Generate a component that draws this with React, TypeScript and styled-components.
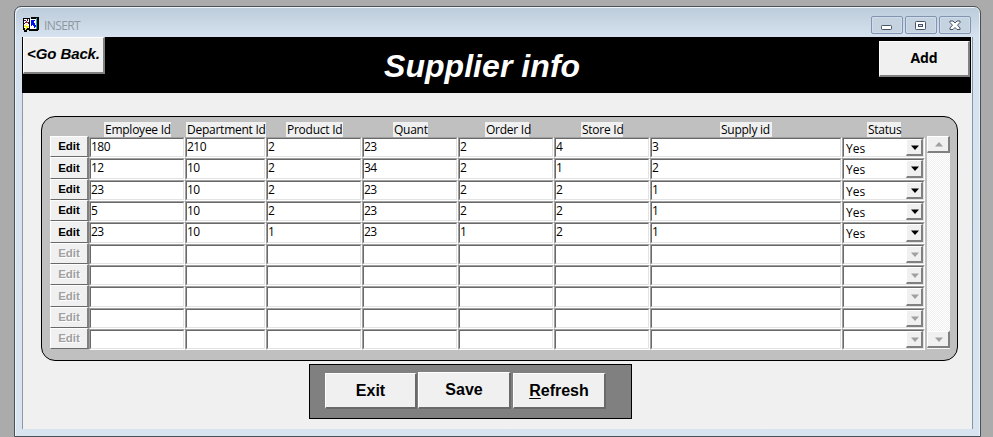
import React from "react";
import styled, { createGlobalStyle, css } from "styled-components";

const GlobalStyle = createGlobalStyle`
  * { box-sizing: border-box; }
  body { margin: 0; background: #ababab; overflow: hidden; }
  button { font: inherit; padding: 0; margin: 0; border-radius: 0; }
`;

const raised = css`
  background: #f0f0f0;
  border-style: solid;
  border-width: 1px 2px 2px 1px;
  border-color: #fff #808080 #808080 #fff;
`;

const Desktop = styled.div`
  width: 993px;
  height: 437px;
  padding: 6px 12px 0 14px;
  background: #ababab;
  font-family: "Open Sans", "Noto Sans", sans-serif;
`;

const Window = styled.div`
  width: 967px;
  height: 431px;
  border: 1px solid #4a5058;
  border-radius: 7px 7px 0 0;
  background: linear-gradient(#bccbda 0, #d6e2ef 30px, #d8e4f0 100%);
  box-shadow: inset 1px 1px 0 #eef4fa, inset -1px 0 0 #e8f0f8;
  padding: 0 7px;
`;

const TitleBar = styled.header`
  height: 30px;
  display: flex;
  align-items: flex-start;
  padding: 9px 2px 0 1px;
`;

const IconSlot = styled.span`
  display: flex;
  margin-top: 1px;
`;

const Caption = styled.span`
  flex: 1;
  margin: 2px 0 0 4px;
  font: 12px/16px "Open Sans", sans-serif;
  letter-spacing: -0.6px;
  color: #8f979e;
`;

const CaptionButtons = styled.div`
  display: flex;
  gap: 2px;
`;

const CaptionButton = styled.button`
  width: 32px;
  height: 18px;
  border: 1px solid #8194b0;
  border-radius: 2px;
  background: #c5d3e1;
  box-shadow: inset 0 0 0 1px #d0dce9;
  display: flex;
  align-items: center;
  justify-content: center;
`;

const Client = styled.main`
  height: 392px;
  width: 951px;
  background: #f0f0f0;
  border-left: 1px solid #8d99a6;
  border-right: 1px solid #8795a3;
  display: flex;
  flex-direction: column;
`;

const Banner = styled.div`
  height: 56px;
  width: 949px;
  margin-left: -1px;
  padding-left: 1px;
  background: #000;
  display: flex;
  align-items: flex-start;
  flex: none;
`;

const Title = styled.h1`
  flex: 1;
  margin: 8px 0 0 0;
  padding-left: 279px;
  font: italic bold 32px/42px "Liberation Sans", Arial, sans-serif;
  letter-spacing: 0.05px;
  white-space: nowrap;
  color: #fff;
`;

const BackButton = styled.button`
  ${raised}
  width: 82px;
  height: 37px;
  padding-bottom: 2px;
  font: italic bold 15px/32px "Liberation Sans", Arial, sans-serif;
  letter-spacing: -0.1px;
  white-space: nowrap;
`;

const AddButton = styled.button`
  ${raised}
  width: 91px;
  height: 36px;
  margin: 4px 1px 0 0;
  padding-bottom: 2px;
  font: bold 14px/30px "Open Sans", sans-serif;
  letter-spacing: -0.2px;
`;

const Panel = styled.section`
  width: 917px;
  height: 245px;
  flex: none;
  margin: 23px 0 0 18px;
  padding: 5px 0 0 8px;
  border: 1px solid #000;
  border-radius: 14px;
  background: #c0c0c0;
`;

const Labels = styled.div`
  display: flex;
  height: 14px;
`;

const Label = styled.span<{ $gap: number; $w: number }>`
  flex: none;
  margin-left: ${(p) => p.$gap}px;
  width: ${(p) => p.$w}px;
  height: 15px;
  padding-left: 1px;
  background: #f0f0f0;
  font-size: 12px;
  line-height: 15px;
  letter-spacing: -0.25px;
  white-space: nowrap;
  color: #000;
`;

const Body = styled.div`
  display: flex;
`;

const Rows = styled.div`
  width: 877px;
`;

const Row = styled.div<{ $h: number }>`
  display: flex;
  height: ${(p) => p.$h}px;
`;

const EditButton = styled.button`
  width: 39px;
  height: 100%;
  flex: none;
  background: #f0f0f0;
  border-style: solid;
  border-width: 1px 2px 1px 1px;
  border-color: #fff #808080 #696969 #fff;
  font: bold 11.5px/17px "Liberation Sans", Arial, sans-serif;
  letter-spacing: 0;
  color: #000;
  &:disabled {
    color: #a0a0a0;
    text-shadow: 1px 1px 0 #fff;
  }
`;

const Field = styled.div<{ $w: number }>`
  flex: none;
  width: ${(p) => p.$w}px;
  height: 100%;
  margin-top: 1px;
  border: 1px solid;
  border-color: #a0a0a0 #fff #fff #a0a0a0;
  background: #e3e3e3;
`;

const Inner = styled.div`
  height: 100%;
  display: flex;
  border: 1px solid;
  border-color: #696969 #e3e3e3 #e3e3e3 #696969;
  background: #fff;
  font-size: 12px;
  line-height: 16px;
  letter-spacing: -0.5px;
  color: #000;
`;

const Choice = styled.span`
  flex: 1;
  padding: 2px 0 0 2px;
  line-height: 15px;
  font-size: 12px;
  letter-spacing: 0;
`;

const DropButton = styled.button`
  ${raised}
  width: 17px;
  height: 100%;
  flex: none;
  display: flex;
  align-items: center;
  justify-content: center;
  padding-left: 2px;
`;

const Scrollbar = styled.div`
  width: 23px;
  height: 213px;
  padding-bottom: 1px;
  display: flex;
  flex-direction: column;
  justify-content: space-between;
  background: repeating-conic-gradient(#fff 0 25%, #f0f0f0 0 50%) 0 0 / 2px 2px;
`;

const ScrollButton = styled.button`
  ${raised}
  height: 17px;
  display: flex;
  align-items: center;
  justify-content: center;
  padding-left: 1px;
`;

const ActionBar = styled.footer`
  flex: none;
  width: 323px;
  height: 55px;
  margin: 3px 0 0 286px;
  padding: 8px 0 0 15px;
  border: 1px solid #000;
  background: #808080;
  display: flex;
`;

const Action = styled.button<{ $w: number; $gap?: number; $lift?: number }>`
  ${raised}
  border-color: #fff #696969 #696969 #fff;
  width: ${(p) => p.$w}px;
  height: ${(p) => 36 + (p.$lift ?? 0)}px;
  margin: ${(p) => -(p.$lift ?? 0)}px 0 0 ${(p) => p.$gap ?? 0}px;
  font: bold 16px/32px "Liberation Sans", Arial, sans-serif;
`;

const Underlined = styled.span`
  text-decoration: underline;
  text-underline-offset: 2px;
`;

const AppIcon = () => (
  <svg width="17" height="16" viewBox="0 0 17 16" shapeRendering="crispEdges">
    <path d="M0 1h7v1h1V0h8v13h-1v1H6v-1H4v2H1v-2H0z" fill="#000" />
    <path d="M1 2h5v9H1z" fill="#fff" />
    <path d="M7 2h6v10H7z" fill="#fff" />
    <path d="M13 1h1v11h-1z" fill="#19b5b5" />
    <path d="M1 3h2v1H1zM4 2h1v2H4zM2 5h2v1H2zM5 5h1v2H5zM1 6h1v1H1z" fill="#3a1060" />
    <path d="M3 4h1v1h1v1H3z" fill="#b02020" />
    <path d="M8 3h4v1h-1v2h1v2h1v2h-1v1h-1V9h-1V8H9v1H8z" fill="#0010ee" />
    <path d="M3 7h1v1H3v1h3v1H5v1H4v1H3v1H2v-2h1v-1H1V9h1V8h1z" fill="#f4ee10" />
  </svg>
);

const Arrow = ({ up, color }: { up?: boolean; color: string }) => (
  <svg width="8" height="5" viewBox="0 0 8 5">
    <path d={up ? "M0 4.5h8L4 0z" : "M0 0.5h8L4 5z"} fill={color} />
  </svg>
);

const MinimizeGlyph = () => (
  <svg width="12" height="12" viewBox="0 0 12 12">
    <rect x="0.5" y="6.5" width="10" height="4" rx="0.8" fill="#fff" stroke="#495366" />
  </svg>
);

const MaximizeGlyph = () => (
  <svg width="12" height="12" viewBox="0 0 12 12">
    <rect x="0.5" y="2.5" width="10" height="8" rx="0.8" fill="#fff" stroke="#495366" />
    <rect x="3.500" y="5.500" width="4" height="2" fill="#d4dfea" stroke="#495366" />
  </svg>
);

const CloseGlyph = () => (
  <svg width="12" height="12" viewBox="0 0 12 12">
    <path
      d="M1 2h3l2 2 2-2h3v1.500L8.500 6.200 11 9v1.500H8l-2-2-2 2H1V9l2.500-2.800L1 3.500z"
      fill="#fff"
      stroke="#495366"
      strokeLinejoin="round"
    />
  </svg>
);

const labels = [
  { text: "Employee Id", gap: 54, w: 67 },
  { text: "Department Id", gap: 15, w: 80 },
  { text: "Product Id", gap: 20, w: 57 },
  { text: "Quant", gap: 50, w: 35 },
  { text: "Order Id", gap: 57, w: 44 },
  { text: "Store Id", gap: 52, w: 42 },
  { text: "Supply id", gap: 97, w: 52 },
  { text: "Status", gap: 95, w: 34 },
];

const widths = [96, 81, 96, 96, 96, 96, 192];
const heights = [21, 22, 21, 21, 22, 21, 21, 22, 21, 21];

const records = [
  ["180", "210", "2", "23", "2", "4", "3"],
  ["12", "10", "2", "34", "2", "1", "2"],
  ["23", "10", "2", "23", "2", "2", "1"],
  ["5", "10", "2", "23", "2", "2", "1"],
  ["23", "10", "1", "23", "1", "2", "1"],
];

export default function App() {
  return (
    <Desktop>
      <GlobalStyle />
      <Window>
        <TitleBar>
          <IconSlot><AppIcon /></IconSlot>
          <Caption>INSERT</Caption>
          <CaptionButtons>
            <CaptionButton aria-label="Minimize"><MinimizeGlyph /></CaptionButton>
            <CaptionButton aria-label="Maximize"><MaximizeGlyph /></CaptionButton>
            <CaptionButton aria-label="Close"><CloseGlyph /></CaptionButton>
          </CaptionButtons>
        </TitleBar>
        <Client>
          <Banner>
            <BackButton>&lt;Go Back.</BackButton>
            <Title>Supplier info</Title>
            <AddButton>Add</AddButton>
          </Banner>
          <Panel>
            <Labels>
              {labels.map((l) => (
                <Label key={l.text} $gap={l.gap} $w={l.w}>{l.text}</Label>
              ))}
            </Labels>
            <Body>
              <Rows>
                {heights.map((h, i) => {
                  const record = records[i];
                  return (
                    <Row key={i} $h={h}>
                      <EditButton disabled={!record}>Edit</EditButton>
                      {widths.map((w, c) => (
                        <Field key={c} $w={w}>
                          <Inner>{record?.[c]}</Inner>
                        </Field>
                      ))}
                      <Field $w={83}>
                        <Inner>
                          <Choice>{record ? "Yes" : ""}</Choice>
                          <DropButton disabled={!record} aria-label="Status options">
                            <Arrow color={record ? "#000" : "#a0a0a0"} />
                          </DropButton>
                        </Inner>
                      </Field>
                    </Row>
                  );
                })}
              </Rows>
              <Scrollbar>
                <ScrollButton aria-label="Scroll up"><Arrow up color="#a0a0a0" /></ScrollButton>
                <ScrollButton aria-label="Scroll down"><Arrow color="#a0a0a0" /></ScrollButton>
              </Scrollbar>
            </Body>
          </Panel>
          <ActionBar>
            <Action $w={92}>Exit</Action>
            <Action $w={93} $gap={1} $lift={1}>Save</Action>
            <Action $w={93} $gap={2}><Underlined>R</Underlined>efresh</Action>
          </ActionBar>
        </Client>
      </Window>
    </Desktop>
  );
}
